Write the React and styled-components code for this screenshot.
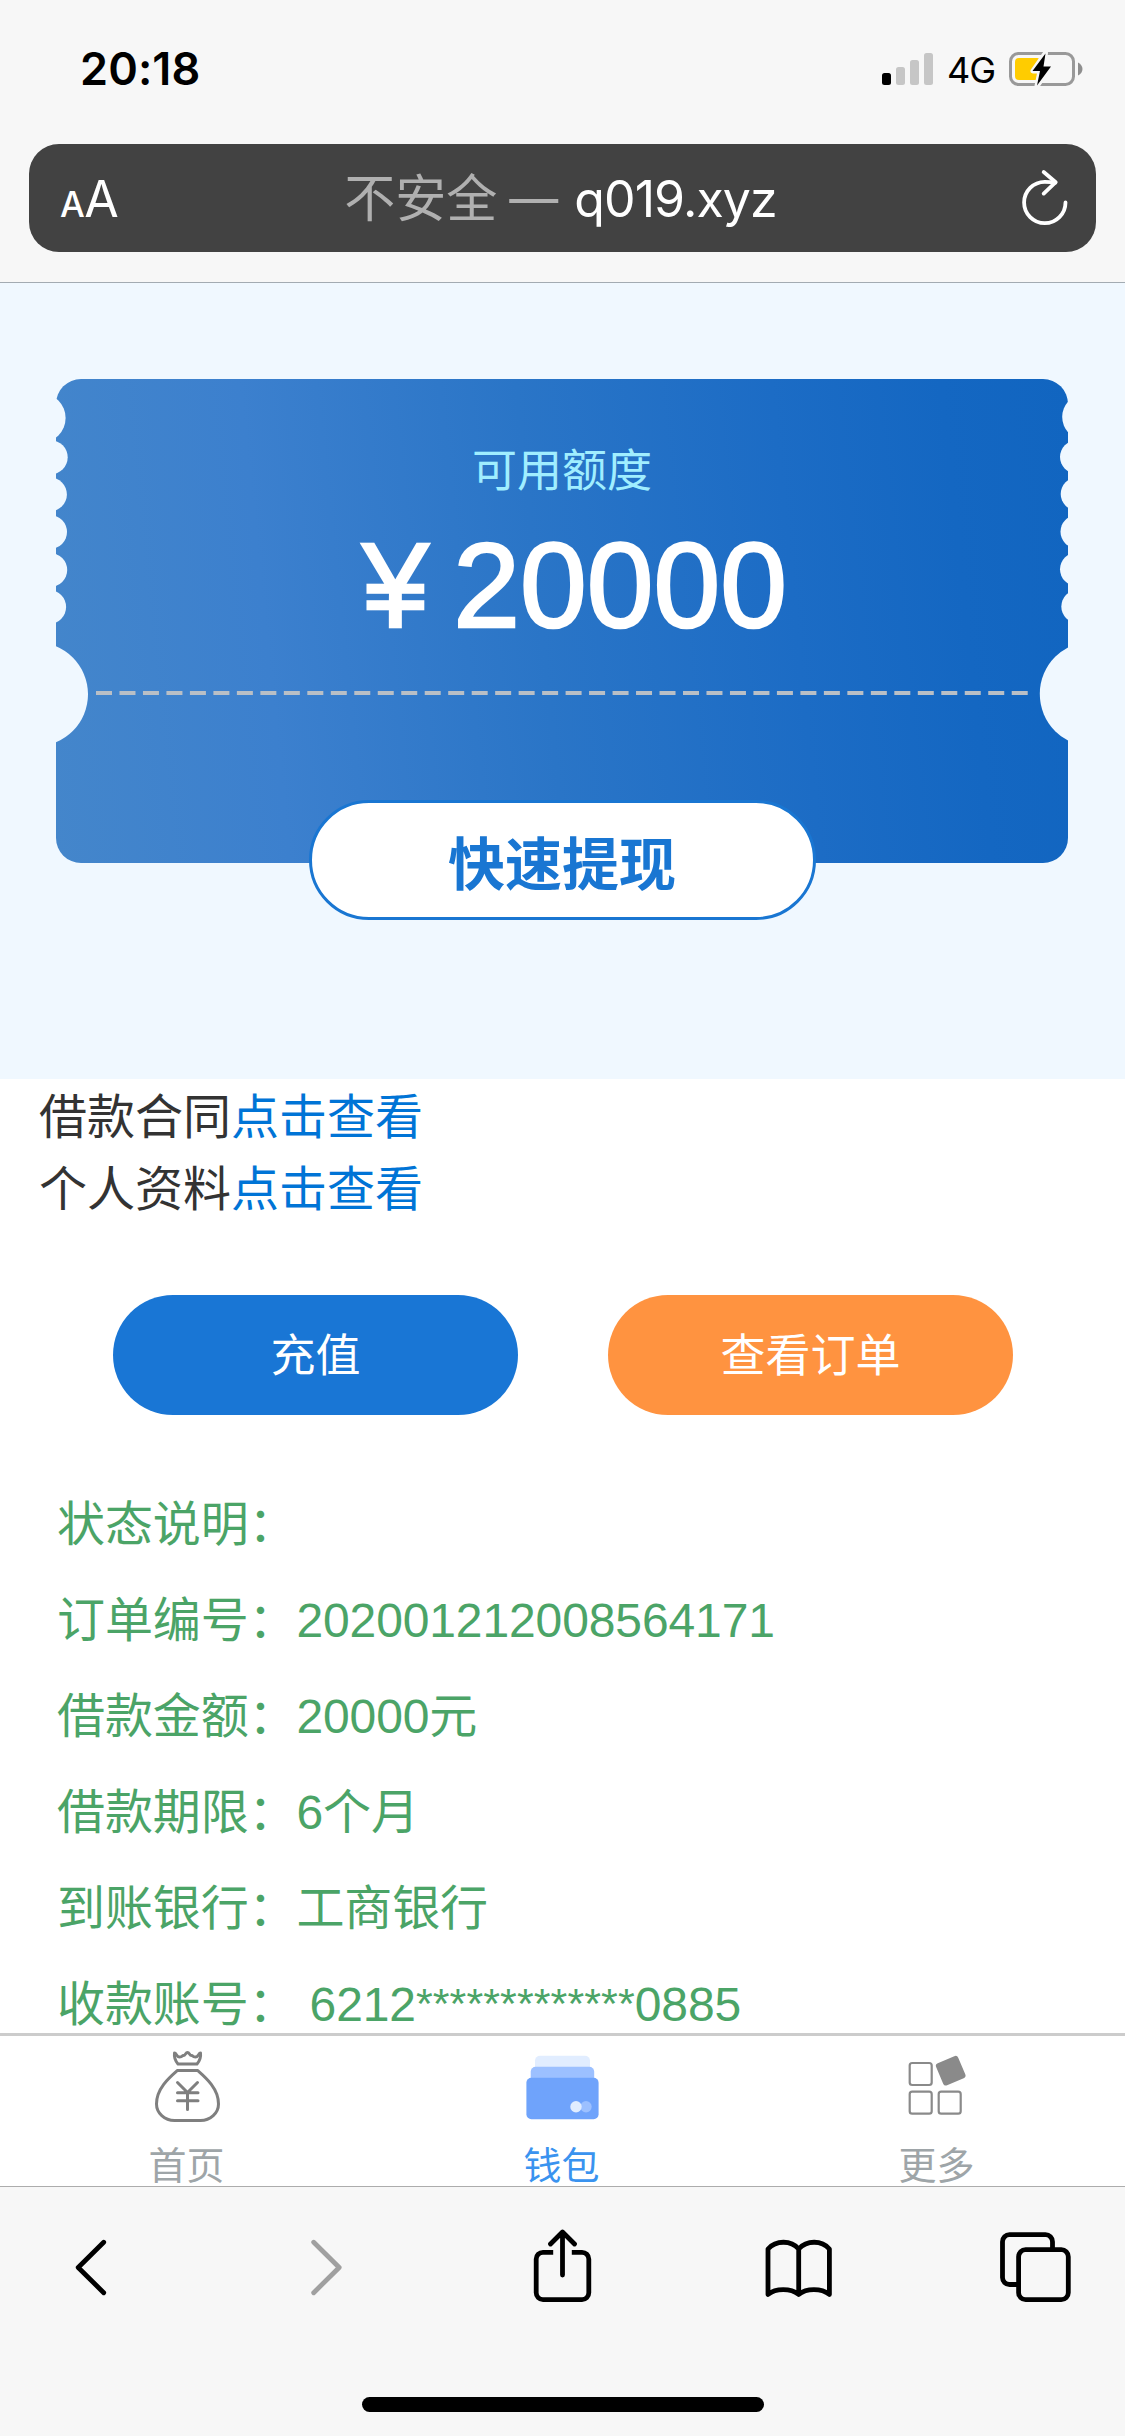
import styled, { createGlobalStyle } from "styled-components";

const leftBites = [
  { cx: 41, cy: 418, r: 24.6 },
  { cx: 50.8, cy: 457.3, r: 16.9 },
  { cx: 50, cy: 494.4, r: 16.9 },
  { cx: 50.1, cy: 532, r: 16.9 },
  { cx: 50.3, cy: 570, r: 16.9 },
  { cx: 49.2, cy: 607, r: 16.9 },
  { cx: 36, cy: 694.3, r: 52 },
];
const rightBites = [
  { cx: 1085, cy: 417, r: 22.8 },
  { cx: 1076.6, cy: 457, r: 16.6 },
  { cx: 1077.3, cy: 494, r: 16.6 },
  { cx: 1077.1, cy: 531.7, r: 16.6 },
  { cx: 1076.6, cy: 569.3, r: 16.6 },
  { cx: 1077.9, cy: 606.5, r: 16.6 },
  { cx: 1092.4, cy: 694, r: 52.6 },
];

const details = [
  { label: "状态说明", value: "" },
  { label: "订单编号", value: "202001212008564171" },
  { label: "借款金额", value: "20000元" },
  { label: "借款期限", value: "6个月" },
  { label: "到账银行", value: "工商银行" },
];

const SignalIcon = () => (
  <svg width="52" height="34" viewBox="0 0 52 34">
    <rect x="0" y="21" width="9" height="12" rx="2.5" fill="#000" />
    <rect x="14" y="15" width="9" height="18" rx="2.5" fill="#c6c6c6" />
    <rect x="28" y="8" width="9" height="25" rx="2.5" fill="#c6c6c6" />
    <rect x="42" y="1" width="9" height="32" rx="2.5" fill="#c6c6c6" />
  </svg>
);

const BatteryIcon = () => (
  <svg width="74" height="36" viewBox="0 0 74 36">
    <rect x="1.5" y="2.5" width="63" height="31" rx="8" fill="none" stroke="#999" strokeWidth="3" />
    <path d="M69 11.5c3 1.5 4.5 4 4.5 6.5s-1.5 5-4.5 6.5z" fill="#8e8e8e" />
    <rect x="6" y="7" width="26" height="22" rx="4" fill="#fc0" />
    <path
      d="M36.5 2 L24 20 H31 L28 35 L42 15.5 H34.5 z"
      fill="#000"
      stroke="#f7f7f7"
      strokeWidth="5"
      strokeLinejoin="round"
    />
    <path d="M36.5 2.5 L23.5 20 H31 L28 34.5 L42 15.5 H34.5 z" fill="#000" />
  </svg>
);

const ReloadIcon = () => (
  <svg width="50" height="58" viewBox="0 0 50 58">
    <g fill="none" stroke="#fff" strokeWidth="3.8" strokeLinecap="round" strokeLinejoin="round">
      <path d="M45.5 33.500a20.700 20.700 0 1 1-20.700-20.700c4 0 7.500.2 10.500.8" />
      <path d="M23.7 3l12 10.200-12 11.400" />
    </g>
  </svg>
);

const BagIcon = () => (
  <svg width="75" height="75" viewBox="0 0 75 75">
    <g fill="none" stroke="#7f7f7f" strokeWidth="3" strokeLinejoin="round" strokeLinecap="round">
      <path d="M24.5 5c2 0 2 4 5 4 3.5 0 2-1.5 4-1.5s2-3 4-3 2 3 4 3 .5 1.5 4 1.5c3 0 3-4 5-4 .5 4-.5 7.500-3.500 11h-19c-3-3.500-4-7-3.500-11z" />
      <path d="M27.500 22.500h20c8 7 21 18 21 33.500 0 9-8 16.500-18 16.500h-26c-10 0-18-7.500-18-16.500 0-15.500 13-26.500 21-33.500z" />
      <path d="M27.500 34.500l10 10 10-10M27.500 44.700h20.500M27.500 52.700h20.500M37.500 44v17.500" />
    </g>
  </svg>
);

const WalletIcon = () => (
  <svg width="75" height="75" viewBox="0 0 75 75">
    <rect x="10" y="7.7" width="55" height="30" rx="5" fill="#e1edff" />
    <rect x="5.7" y="18.7" width="63.5" height="30" rx="5" fill="#9cc0ff" />
    <rect x="1.4" y="29.7" width="72.2" height="41.6" rx="5" fill="#6fa3fb" />
    <circle cx="61" cy="58.7" r="5.7" fill="#9cc0ff" />
    <circle cx="51" cy="58.7" r="5.7" fill="#e1edff" />
  </svg>
);

const MoreIcon = () => (
  <svg width="75" height="75" viewBox="0 0 75 75">
    <g fill="none" stroke="#8a8a8a" strokeWidth="2.2">
      <rect x="9.7" y="15" width="22" height="22" rx="2.5" />
      <rect x="9.7" y="43.7" width="22" height="22" rx="2.5" />
      <rect x="38.7" y="43.7" width="22" height="22" rx="2.5" />
    </g>
    <rect
      x="38.7"
      y="10.7"
      width="24"
      height="24"
      rx="3"
      fill="#8a8a8a"
      transform="rotate(-23 50.7 22.7)"
    />
  </svg>
);

const App = () => {
  return (
    <Screen>
      <GlobalStyle />
      <StatusBar>
        <Clock>20:18</Clock>
        <StatusIcons>
          <SignalIcon />
          <Network>4G</Network>
          <BatteryIcon />
        </StatusIcons>
      </StatusBar>
      <AddressArea>
        <AddressBar>
          <TextSize>
            <small>A</small>A
          </TextSize>
          <Address>
            <Insecure>不安全</Insecure>
            <Dash>—</Dash>
            <span>q019.xyz</span>
          </Address>
          <ReloadIcon />
        </AddressBar>
      </AddressArea>

      <Hero>
        <Ticket>
          <TicketEdge viewBox="56 379 1012 484">
            {[...leftBites, ...rightBites].map((b) => (
              <circle key={`${b.cx}-${b.cy}`} {...b} fill="#f0f8ff" />
            ))}
            <path d="M96 693H1030" stroke="#b9bfc6" strokeWidth="4" strokeDasharray="16 7.48" />
          </TicketEdge>
          <QuotaLabel>可用额度</QuotaLabel>
          <Quota>¥ 20000</Quota>
          <WithdrawButton>快速提现</WithdrawButton>
        </Ticket>
      </Hero>

      <Content>
        <Links>
          <p>
            借款合同<a>点击查看</a>
          </p>
          <p>
            个人资料<a>点击查看</a>
          </p>
        </Links>
        <Actions>
          <ActionButton $color="#1976d5">充值</ActionButton>
          <ActionButton $color="#ff9340">查看订单</ActionButton>
        </Actions>
        <Details>
          {details.map((d) => (
            <DetailRow key={d.label}>
              {d.label}：{d.value}
            </DetailRow>
          ))}
          <DetailRow>
            收款账号： 6212<Mask>*************</Mask>0885
          </DetailRow>
        </Details>
      </Content>

      <TabBar>
        <Tab>
          <BagIcon />
          <TabLabel>首页</TabLabel>
        </Tab>
        <Tab>
          <WalletIcon />
          <TabLabel $active>钱包</TabLabel>
        </Tab>
        <Tab>
          <MoreIcon />
          <TabLabel>更多</TabLabel>
        </Tab>
      </TabBar>

      <BrowserBar>
        <Tools>
          <ToolIcon viewBox="0 0 75 75">
            <path d="M50.7 13.3L25.200 38.500l25.500 25.200" />
          </ToolIcon>
          <ToolIcon viewBox="0 0 75 75" $muted>
            <path d="M24.7 13.3l25.500 25.200-25.500 25.200" />
          </ToolIcon>
          <ToolIcon viewBox="0 0 75 75">
            <path
              strokeLinecap="butt"
              d="M28.2 23.3H18a6.800 6.800 0 0 0-6.800 6.800v33.700a6.800 6.800 0 0 0 6.800 6.800h39a6.800 6.800 0 0 0 6.800-6.800V30.100a6.800 6.800 0 0 0-6.800-6.800H46.800"
            />
            <path d="M37.5 46V4M25.5 15l12-12 12 12" />
          </ToolIcon>
          <ToolIcon viewBox="0 0 75 75">
            <path d="M7 65.500V20c8-9 23-9 30.700 0 8-9 23-9 30.700 0v45.500c-8-6.500-23-6.500-30.700 0-8-6.500-23-6.500-30.700 0zM37.700 20v45.500" />
          </ToolIcon>
          <ToolIcon viewBox="0 0 75 75">
            <rect x="20.6" y="20.7" width="49.7" height="50" rx="7" />
            <path d="M20 55.500h-8.500a7 7 0 0 1-7-7V12.700a7 7 0 0 1 7-7h36a7 7 0 0 1 7 7v7" />
          </ToolIcon>
        </Tools>
        <HomeIndicator />
      </BrowserBar>
    </Screen>
  );
};

const GlobalStyle = createGlobalStyle`
  * {
    box-sizing: border-box;
  }
  body {
    margin: 0;
    background-color: #fff;
    font-family: "Liberation Sans", "Noto Sans CJK SC", sans-serif;
  }
  p {
    margin: 0;
  }
  svg {
    display: block;
    flex-shrink: 0;
  }
`;

const Screen = styled.div`
  display: flex;
  flex-direction: column;
  width: 1125px;
  height: 2436px;
  overflow: hidden;
`;

const StatusBar = styled.div`
  display: flex;
  justify-content: space-between;
  align-items: center;
  height: 138px;
  padding: 0 42px 0 80px;
  background-color: #f7f7f7;
  font-family: Inter, sans-serif;
`;

const Clock = styled.div`
  font-size: 45px;
  font-weight: 600;
  line-height: 60px;
  letter-spacing: 0.1px;
`;

const StatusIcons = styled.div`
  display: flex;
  align-items: center;
`;

const Network = styled.span`
  width: 75px;
  padding: 2px 0 0 13px;
  font-size: 36px;
  font-weight: 400;
  letter-spacing: -1px;
`;

const AddressArea = styled.div`
  height: 145px;
  padding: 6px 29px 0;
  background-color: #f7f7f7;
  border-bottom: 1px solid #a3abb2;
`;

const AddressBar = styled.div`
  display: flex;
  align-items: center;
  justify-content: space-between;
  height: 108px;
  padding: 0 26px 0 31px;
  border-radius: 30px;
  background-color: #424242;
  color: #fff;
  font-family: Inter, "Noto Sans CJK SC", sans-serif;
`;

const TextSize = styled.div`
  width: 60px;
  padding-top: 2px;
  font-size: 50px;
  letter-spacing: -0.5px;
  white-space: nowrap;
  small {
    font-size: 35px;
    font-weight: 500;
  }
`;

const Address = styled.div`
  display: flex;
  margin-right: 19px;
  padding-top: 1px;
  font-size: 50px;
  line-height: 72px;
  letter-spacing: -0.9px;
`;

const Insecure = styled.span`
  color: #b0b0b0;
  font-size: 51px;
  letter-spacing: 0;
`;

const Dash = styled.span`
  width: 50px;
  margin: 0 15px 0 12px;
  color: #b0b0b0;
  font-size: 49px;
`;

const Hero = styled.div`
  height: 796px;
  padding: 96px 57px 0 56px;
  background-color: #f0f8ff;
`;

const Ticket = styled.div`
  position: relative;
  display: flex;
  flex-direction: column;
  align-items: center;
  height: 484px;
  padding-top: 60px;
  border-radius: 25px;
  background: linear-gradient(84deg, #4486cb 0%, #3c80ce 22%, #2a75c7 48%, #1c6cc5 72%, #1467c2 88%, #1165c0 100%);
`;

/* perforated edge and tear line */
const TicketEdge = styled.svg`
  position: absolute;
  inset: 0;
  width: 100%;
  height: 100%;
`;

const QuotaLabel = styled.div`
  position: relative;
  color: #a0eeff;
  font-size: 45px;
  line-height: 66px;
`;

const Quota = styled.div`
  position: relative;
  margin-top: 11px;
  padding-left: 25px;
  color: #fff;
  font-size: 120px;
  line-height: 138px;
  white-space: nowrap;
  word-spacing: -9px;
  -webkit-text-stroke: 2.5px #fff;
`;

const WithdrawButton = styled.button`
  position: relative;
  width: 507px;
  height: 120px;
  margin-top: 146px;
  padding: 0;
  flex-shrink: 0;
  border: 3px solid #1976d2;
  border-radius: 60px;
  background-color: #fff;
  color: #1976d2;
  font-family: inherit;
  font-size: 57px;
  font-weight: 700;
`;

const Content = styled.div`
  height: 954px;
  padding-top: 3px;
  overflow: hidden;
`;

const Links = styled.div`
  padding-left: 39px;
  color: #333;
  font-size: 48px;
  line-height: 72px;
  a {
    color: #0074d6;
  }
`;

const Actions = styled.div`
  display: flex;
  justify-content: space-between;
  padding: 69px 112px 0 113px;
`;

const ActionButton = styled.button`
  width: 405px;
  height: 120px;
  padding-bottom: 7px;
  border: none;
  border-radius: 60px;
  background-color: ${(props) => props.$color};
  color: #fff;
  font-family: inherit;
  font-size: 45px;
`;

const Details = styled.div`
  padding: 62px 0 0 57px;
`;

const DetailRow = styled.div`
  height: 96px;
  color: #4ba467;
  font-size: 48px;
  line-height: 96px;
  letter-spacing: -0.12px;
  white-space: pre;
`;

const Mask = styled.span`
  font-size: 43px;
  line-height: 1;
  letter-spacing: 0.1px;
  vertical-align: 3px;
`;

const TabBar = styled.div`
  display: flex;
  height: 153px;
  border-top: 3px solid #ccc;
  background-color: #fff;
`;

const Tab = styled.div`
  display: flex;
  flex: 1;
  flex-direction: column;
  align-items: center;
  gap: 15px;
  padding-top: 12px;
`;

const TabLabel = styled.span`
  margin-right: 2px;
  color: ${(props) => (props.$active ? "#3a93ef" : "#9ea5a8")};
  font-size: 38px;
  line-height: 56px;
`;

const BrowserBar = styled.div`
  display: flex;
  flex: 1;
  flex-direction: column;
  align-items: center;
  padding-top: 42px;
  border-top: 1px solid #acacac;
  background-color: #f7f7f7;
`;

const Tools = styled.div`
  display: flex;
  justify-content: space-between;
  width: 100%;
  padding: 0 52.5px;
`;

const ToolIcon = styled.svg`
  width: 75px;
  height: 75px;
  fill: none;
  stroke: ${(props) => (props.$muted ? "#a0a0a0" : "#000")};
  stroke-width: 4.8px;
  stroke-linecap: round;
  stroke-linejoin: round;
`;

const HomeIndicator = styled.div`
  width: 402px;
  height: 15px;
  margin-top: 93px;
  border-radius: 8px;
  background-color: #000;
`;

export default App;
